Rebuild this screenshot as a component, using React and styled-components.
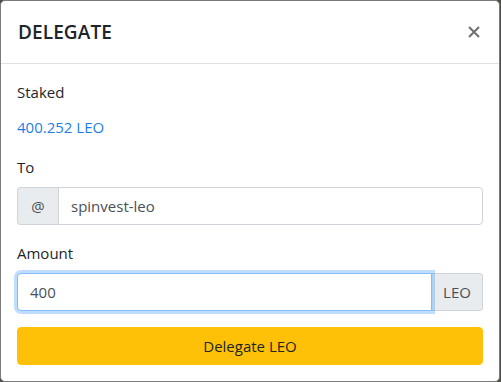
import React from "react";
import styled, { createGlobalStyle } from "styled-components";

const Global = createGlobalStyle`
  html, body { margin: 0; padding: 0; }
  body {
    background: #4d4d45;
    font-family: "Open Sans", "Noto Sans", sans-serif;
    color: #212529;
    width: 501px;
    height: 382px;
    overflow: hidden;
  }
  * { box-sizing: border-box; }
`;

const Modal = styled.div`
  width: 500px;
  height: 382px;
  background: #fff;
  border: 1px solid #7b7b7b;
  border-radius: 5px;
  display: flex;
  flex-direction: column;
`;

const Header = styled.div`
  display: flex;
  align-items: center;
  justify-content: space-between;
  padding: 16px 16px 16px 17px;
  border-bottom: 1px solid #dee2e6;
  height: 63px;
`;

const Title = styled.h5`
  margin: 0;
  font-size: 19px;
  font-weight: 600;
  letter-spacing: 0.1px;
  line-height: 30px;
  color: #212529;
`;

const Close = styled.button`
  border: 0;
  background: transparent;
  padding: 0;
  margin-right: 2px;
  width: 14px;
  height: 14px;
  display: flex;
  align-items: center;
  justify-content: center;
  cursor: pointer;
`;

const Body = styled.div`
  padding: 16px;
  display: flex;
  flex-direction: column;
`;

const Label = styled.div`
  font-size: 15px;
  line-height: 24px;
  margin-bottom: ${(p) => p.$mb ?? 8}px;
`;

const Value = styled.div`
  font-size: 15px;
  line-height: 24px;
  color: #1c7fe6;
  margin-bottom: 16px;
`;

const Group = styled.div`
  display: flex;
  align-items: stretch;
  height: 38px;
  margin-bottom: 16px;
  position: relative;
`;

const Addon = styled.div`
  display: flex;
  align-items: center;
  justify-content: center;
  width: ${(p) => p.$w}px;
  flex: 0 0 auto;
  background: #e9ecef;
  border: 1px solid #ced4da;
  color: #495057;
  font-size: 15px;
  border-radius: ${(p) => (p.$side === "left" ? "4px 0 0 4px" : "0 4px 4px 0")};
  ${(p) => (p.$side === "left" ? "border-right: 0;" : "border-left: 0;")}
`;

const Input = styled.input`
  flex: 1;
  min-width: 0;
  height: 38px;
  padding: 6px 12px;
  font-family: inherit;
  font-size: 15px;
  color: #495057;
  background: #fff;
  border: 1px solid ${(p) => (p.$focused ? "#80bdff" : "#ced4da")};
  border-radius: ${(p) => (p.$side === "left" ? "4px 0 0 4px" : "0 4px 4px 0")};
  outline: none;
  position: relative;
  z-index: ${(p) => (p.$focused ? 3 : 1)};
  box-shadow: ${(p) => (p.$focused ? "0 0 0 3px rgba(0,123,255,.25)" : "none")};
`;

const Button = styled.button`
  width: 100%;
  height: 38px;
  border: 1px solid #ffc107;
  background: #ffc107;
  border-radius: 4px;
  font-family: inherit;
  font-size: 15px;
  color: #212529;
  cursor: pointer;
`;

export default function App() {
  return (
    <>
      <Global />
      <Modal>
        <Header>
          <Title>DELEGATE</Title>
          <Close aria-label="Close">
            <svg width="12" height="12" viewBox="0 0 12 12">
              <path d="M1 1L11 11M11 1L1 11" stroke="#6f6f6f" strokeWidth="2" strokeLinecap="butt" />
            </svg>
          </Close>
        </Header>
        <Body>
          <Label $mb={11}>Staked</Label>
          <Value>400.252 LEO</Value>
          <Label>To</Label>
          <Group>
            <Addon $w={41} $side="left">@</Addon>
            <Input $side="right" defaultValue="spinvest-leo" />
          </Group>
          <Label>Amount</Label>
          <Group>
            <Input $side="left" $focused autoFocus defaultValue="400" />
            <Addon $w={51} $side="right">LEO</Addon>
          </Group>
          <Button>Delegate LEO</Button>
        </Body>
      </Modal>
    </>
  );
}
